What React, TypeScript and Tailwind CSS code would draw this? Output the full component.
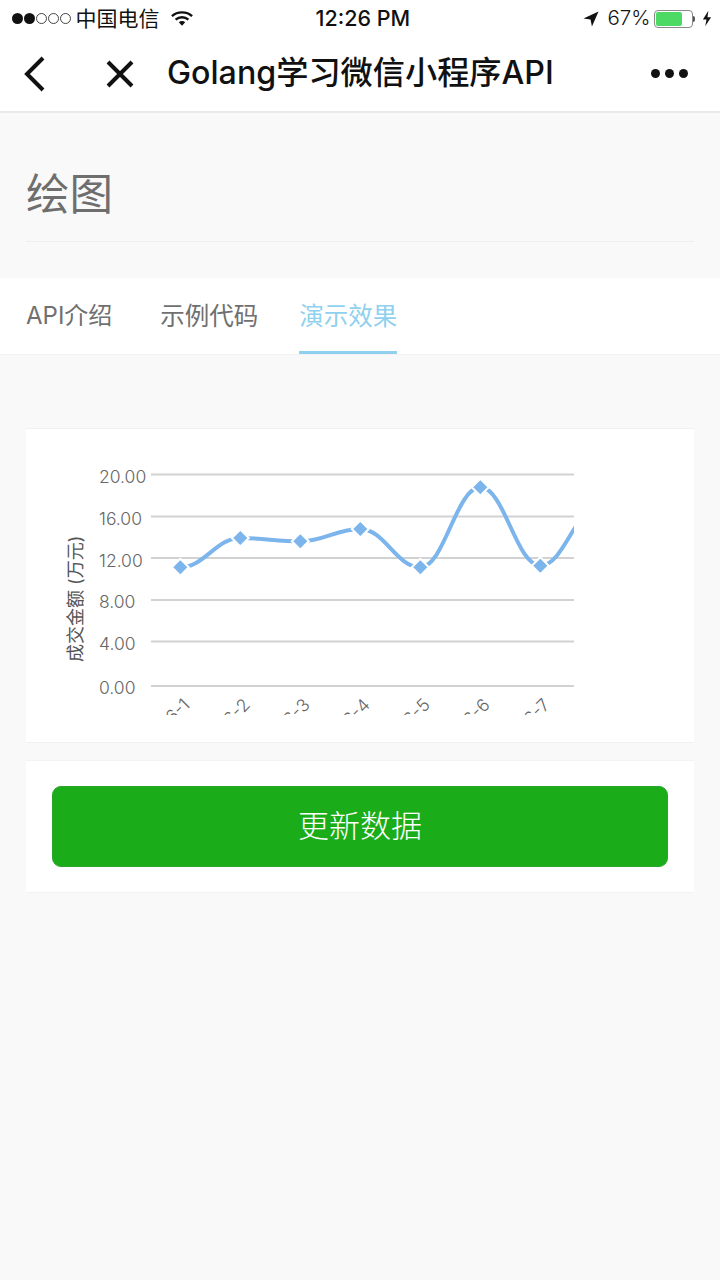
const FONT = "font-['Inter','Noto_Sans_CJK_SC',sans-serif]";

const pts: [number, number][] = [
  [120, 567.3],
  [180.3, 567.3],
  [240.3, 538],
  [300.3, 541.3],
  [360.3, 529],
  [420.3, 567.3],
  [480.3, 487.3],
  [540.3, 565.7],
  [600.3, 505],
  [660.3, 505],
];

function splinePath(p: [number, number][]) {
  const s = 1.5;
  const d = 2.5;
  const conts = p.map(([x, y], i) => {
    if (i === 0 || i === p.length - 1) return { lx: x, ly: y, rx: x, ry: y };
    const [lastX, lastY] = p[i - 1];
    const [nextX, nextY] = p[i + 1];
    const lx = (s * x + lastX) / d;
    let ly = (s * y + lastY) / d;
    const rx = (s * x + nextX) / d;
    let ry = (s * y + nextY) / d;
    const c = ((ry - ly) * (rx - x)) / (rx - lx) + y - ry;
    ly += c;
    ry += c;
    if (ly > lastY && ly > y) {
      ly = Math.max(lastY, y);
      ry = 2 * y - ly;
    } else if (ly < lastY && ly < y) {
      ly = Math.min(lastY, y);
      ry = 2 * y - ly;
    }
    if (ry > nextY && ry > y) {
      ry = Math.max(nextY, y);
      ly = 2 * y - ry;
    } else if (ry < nextY && ry < y) {
      ry = Math.min(nextY, y);
      ly = 2 * y - ry;
    }
    return { lx, ly, rx, ry };
  });
  let out = `M${p[1][0]} ${p[1][1]}`;
  for (let i = 2; i < p.length - 1; i++) {
    out += ` C${conts[i - 1].rx} ${conts[i - 1].ry} ${conts[i].lx} ${conts[i].ly} ${p[i][0]} ${p[i][1]}`;
  }
  return out;
}

function Chart() {
  const ox = 26;
  const oy = 429;
  const grid = [474.5, 516.5, 558, 600, 641.5, 686];
  const labels = ["20.00", "16.00", "12.00", "8.00", "4.00", "0.00"];
  const labelY = [482.5, 524.5, 566.5, 607.5, 649.5, 693.5];
  const labelFont = "Inter, 'Noto Sans CJK SC', sans-serif";
  return (
    <svg width="666" height="313" viewBox={`${ox} ${oy} 666 313`} className="block">
      <defs>
        <clipPath id="plot">
          <rect x="150" y="440" width="424" height="275" />
        </clipPath>
      </defs>
      {grid.map((y) => (
        <line key={y} x1="151" x2="574" y1={y} y2={y} stroke="#d2d2d2" strokeWidth="2" />
      ))}
      {labels.map((t, i) => (
        <text key={t} x="99" y={labelY[i]} fontSize="17.5" fontWeight="300" fill="#666" fontFamily={labelFont}>
          {t}
        </text>
      ))}
      <text
        transform="translate(82 662) rotate(-90)"
        fontSize="18"
        fill="#555"
        fontFamily={labelFont}
      >
        成交金额 (万元)
      </text>
      <g clipPath="url(#plot)">
        <path d={splinePath(pts)} fill="none" stroke="#7cb5ec" strokeWidth="4" />
        {[1, 2, 3, 4, 5, 6, 7].map((n) => (
          <text
            key={n}
            transform={`translate(${131 + n * 60} 706) rotate(-45)`}
            textAnchor="end"
            fontSize="17.5"
            fontWeight="300"
            fill="#666"
            fontFamily={labelFont}
          >
            {`2016-${n}`}
          </text>
        ))}
        {pts.slice(1, 8).map(([x, y]) => (
          <path
            key={x}
            d={`M${x} ${y - 8.5}L${x + 8.5} ${y}L${x} ${y + 8.5}L${x - 8.5} ${y}Z`}
            fill="#7cb5ec"
            stroke="#fff"
            strokeWidth="2"
          />
        ))}
      </g>
    </svg>
  );
}

function StatusBar() {
  return (
    <div className="flex h-[37px] items-center pl-[12px] text-[21px] text-[#111]">
      <div className="flex items-center gap-[1.5px]">
        <span className="h-[10.5px] w-[10.5px] rounded-full bg-[#111]" />
        <span className="h-[10.5px] w-[10.5px] rounded-full bg-[#111]" />
        <span className="h-[10.5px] w-[10.5px] rounded-full border border-[#444]" />
        <span className="h-[10.5px] w-[10.5px] rounded-full border border-[#444]" />
        <span className="h-[10.5px] w-[10.5px] rounded-full border border-[#444]" />
      </div>
      <span className="ml-[5px] w-[84px] whitespace-nowrap">中国电信</span>
      <svg width="22" height="17" viewBox="0 0 24 18" className="ml-[11px]">
        <path d="M1 6.5C7 1 17 1 23 6.5" fill="none" stroke="#111" strokeWidth="2.6" />
        <path d="M5 10.2C9 6.8 15 6.8 19 10.2" fill="none" stroke="#111" strokeWidth="2.6" />
        <path d="M8.5 13L12 16.8L15.5 13C13.5 11.4 10.5 11.4 8.5 13Z" fill="#111" />
      </svg>
      <span className="ml-[123px] w-[95px] text-[21.5px] font-medium whitespace-nowrap">12:26 PM</span>
      <svg width="16" height="16" viewBox="0 0 17 17" className="ml-[172px] shrink-0">
        <path d="M16.5 0.5L0.5 8L8 9L9.5 16.5Z" fill="#111" />
      </svg>
      <span className="ml-[9px] w-[41px] text-[20.5px] font-light whitespace-nowrap">67%</span>
      <div className="ml-[5px] flex items-center">
        <div className="h-[18px] w-[39px] rounded-[4px] border border-[#888] p-[1px]">
          <div className="h-full w-[26px] rounded-[2px] bg-[#4cd964]" />
        </div>
        <div className="h-[6px] w-[2px] rounded-r-[2px] bg-[#555]" />
      </div>
      <svg width="10" height="17" viewBox="0 0 11 17" className="ml-[7px] shrink-0">
        <path d="M7 0L1 9.5H5L3.5 17L10 7H6Z" fill="#111" />
      </svg>
    </div>
  );
}

function NavBar() {
  return (
    <div className="flex h-[76px] items-center border-b-2 border-[#e9e9e9] pb-[1px]">
      <svg width="24" height="36" viewBox="0 0 24 36" className="ml-[23px]">
        <path d="M20 2L4 18L20 34" fill="none" stroke="#111" strokeWidth="4" />
      </svg>
      <svg width="28" height="28" viewBox="0 0 28 28" className="ml-[59px]">
        <path d="M2 2L26 26M26 2L2 26" fill="none" stroke="#111" strokeWidth="4" />
      </svg>
      <span className="ml-[33px] text-[32.2px] font-medium whitespace-nowrap text-[#111]">
        Golang学习微信小程序API
      </span>
      <div className="ml-auto mr-[32px] flex gap-[5px]">
        <span className="h-[9px] w-[9px] rounded-full bg-[#111]" />
        <span className="h-[9px] w-[9px] rounded-full bg-[#111]" />
        <span className="h-[9px] w-[9px] rounded-full bg-[#111]" />
      </div>
    </div>
  );
}

export default function App() {
  return (
    <div className={`${FONT} h-[1280px] w-[720px] overflow-hidden bg-[#f9f9f9]`}>
      <div className="bg-white">
        <StatusBar />
        <NavBar />
      </div>
      <div className="mx-[26px] mt-[47px] h-[82px] border-b border-[#efefef] text-[43.5px] leading-[68px] text-[#6e6e6e]">
        绘图
      </div>
      <div className="mt-[36px] flex h-[77px] border-b border-[#f1f1f1] bg-white pl-[26px] text-[24.5px] text-[#707070]">
        <div className="pt-[20px] text-[24px]">API介绍</div>
        <div className="ml-[48px] pt-[20px]">示例代码</div>
        <div className="ml-[41px] border-b-[3px] border-[#8fd1ee] pt-[20px] text-[#8fd1ee]">演示效果</div>
      </div>
      <div className="mx-[26px] mt-[73px] border-y border-[#f0f0f0] bg-white">
        <Chart />
      </div>
      <div className="mx-[26px] mt-[17px] border-y border-[#f3f3f3] bg-white px-[26px] pt-[25px] pb-[25px]">
        <button className="flex h-[81px] w-full items-center justify-center rounded-[9px] border border-[#2aa52a] bg-[#1aad19] text-[31px] font-light text-white">
          更新数据
        </button>
      </div>
    </div>
  );
}
